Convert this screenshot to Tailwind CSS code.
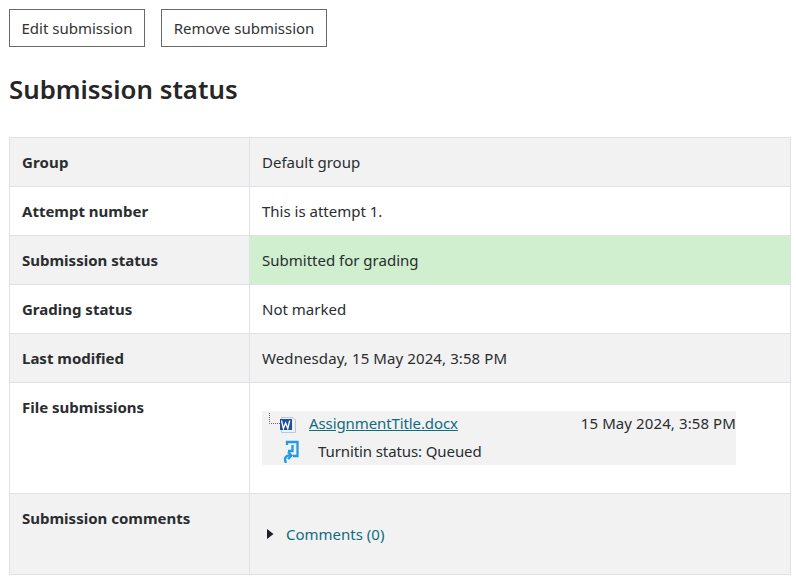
<!DOCTYPE html>
<html>
<head>
<meta charset="utf-8">
<script src="https://cdn.jsdelivr.net/npm/@tailwindcss/browser@4"></script>
</head>
<body class="bg-white font-['Noto_Sans',sans-serif] text-[15px] text-[#2a2d30] overflow-hidden h-[584px]">
<div class="pl-[9px] pr-[5px] pt-[9px]">
  <div class="flex gap-4">
    <button class="h-[38px] w-[136px] border border-[#6a6a6a] text-[15px] text-[#333] leading-none">Edit submission</button>
    <button class="h-[38px] w-[166px] border border-[#6a6a6a] text-[15px] text-[#333] leading-none">Remove submission</button>
  </div>
  <h2 class="mt-[24px] text-[25.8px] leading-[36px] font-semibold text-[#262626]">Submission status</h2>
  <table class="mt-[30px] w-[782px] table-fixed border-collapse">
    <colgroup><col class="w-[240px]"><col></colgroup>
    <tbody>
      <tr class="bg-[#f2f2f2] h-[49px]">
        <th class="border border-[#dee2e6] px-3 text-left tracking-[0.15px] font-bold align-middle">Group</th>
        <td class="border border-[#dee2e6] px-3 align-middle">Default group</td>
      </tr>
      <tr class="h-[49px]">
        <th class="border border-[#dee2e6] px-3 text-left font-bold align-middle">Attempt number</th>
        <td class="border border-[#dee2e6] px-3 align-middle">This is attempt 1.</td>
      </tr>
      <tr class="h-[49px]">
        <th class="border border-[#dee2e6] bg-[#f2f2f2] px-3 text-left font-bold align-middle">Submission status</th>
        <td class="border border-[#dee2e6] bg-[#cfefcf] px-3 align-middle">Submitted for grading</td>
      </tr>
      <tr class="h-[49px]">
        <th class="border border-[#dee2e6] px-3 text-left font-bold align-middle">Grading status</th>
        <td class="border border-[#dee2e6] px-3 align-middle">Not marked</td>
      </tr>
      <tr class="bg-[#f2f2f2] h-[49px]">
        <th class="border border-[#dee2e6] px-3 text-left font-bold align-middle">Last modified</th>
        <td class="border border-[#dee2e6] px-3 align-middle tracking-[0.1px]">Wednesday, 15 May 2024, 3:58 PM</td>
      </tr>
      <tr class="h-[111px]">
        <th class="border border-[#dee2e6] px-3 pt-[13px] text-left font-bold align-top">File submissions</th>
        <td class="border border-[#dee2e6] px-3 pt-[28px] align-top">
          <div class="w-[474px] h-[54px] bg-[#f2f2f2]">
            <div class="flex items-center h-[25px]">
              <svg class="w-[34px] h-[24px] shrink-0" viewBox="0 0 34 24">
                <path d="M7.500 1V11.500H18" fill="none" stroke="#666" stroke-width="1" stroke-dasharray="1 1"/>
                <path d="M19.500 5.500H31L33.500 8V20.500H19.500Z" fill="#eef2f8" stroke="#b9c6dc"/>
                <rect x="18" y="7" width="12" height="11" fill="#1f4e9c"/>
                <path d="M19.500 8.500l1.900 8 2.200-5.500 2.200 5.500 1.900-8" fill="none" stroke="#fff" stroke-width="1.300"/>
              </svg>
              <a class="ml-[13px] text-[#0f6c7f] underline tracking-[-0.1px]">AssignmentTitle.docx</a>
              <span class="ml-auto tracking-[0.1px]">15 May 2024, 3:58 PM</span>
            </div>
            <div class="flex items-center h-[29px]">
              <svg class="ml-[21px] w-[18px] h-[24px] shrink-0" viewBox="0 0 18 24" fill="none" stroke="#1e9be8" stroke-width="2.300">
                <path d="M4 6V3H14.500V17H10"/>
                <path d="M9.500 6V12H5"/>
                <path d="M3 24C0.500 19 3.500 15.500 8 16.500"/>
                <path d="M5 13L8.500 16.500 5 20"/>
              </svg>
              <span class="ml-[17px] mt-[2px] tracking-[-0.1px]">Turnitin status: Queued</span>
            </div>
          </div>
        </td>
      </tr>
      <tr class="bg-[#f2f2f2] h-[81px]">
        <th class="border border-[#dee2e6] px-3 pt-[13px] text-left font-bold align-top">Submission comments</th>
        <td class="border border-[#dee2e6] px-3 pt-[29px] align-top">
          <div class="flex items-center">
            <svg class="ml-[5px] w-[7px] h-[10px]" viewBox="0 0 7 10"><path d="M0 0L6.500 5 0 10Z" fill="#1d2125"/></svg>
            <a class="ml-[12px] text-[#0f6c7f]">Comments (0)</a>
          </div>
        </td>
      </tr>
    </tbody>
  </table>
</div>
</body>
</html>
